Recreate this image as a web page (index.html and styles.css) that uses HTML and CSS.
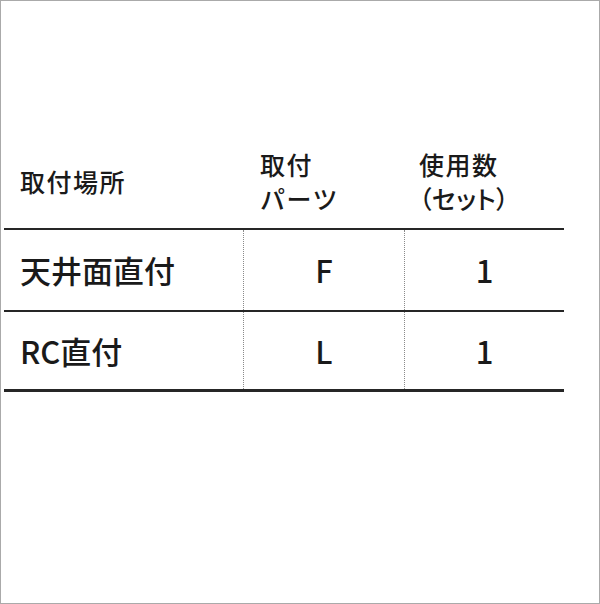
FILE: index.html
```html
<!DOCTYPE html>
<html lang="ja">
<head>
<meta charset="utf-8">
<link rel="stylesheet" href="styles.css">
</head>
<body>
<div class="frame">
  <div class="table">
    <div class="row head">
      <div class="cell c1">取付場所</div>
      <div class="cell c2">取付<br>パーツ</div>
      <div class="cell c3">使用数<br><span class="paren">（セット）</span></div>
    </div>
    <div class="row body r1">
      <div class="cell c1">天井面直付</div>
      <div class="cell c2">F</div>
      <div class="cell c3">1</div>
    </div>
    <div class="row body r2">
      <div class="cell c1">RC直付</div>
      <div class="cell c2">L</div>
      <div class="cell c3">1</div>
    </div>
  </div>
</div>
</body>
</html>
```

FILE: styles.css
```css
html, body {
  margin: 0;
  padding: 0;
  background: #fff;
}
.frame {
  width: 600px;
  height: 604px;
  box-sizing: border-box;
  border: 1px solid #aaa;
  padding: 133px 0 0 3px;
  font-family: "Noto Sans CJK JP", "Noto Sans", sans-serif;
  font-weight: 500;
  color: #1a1a1a;
}
.table {
  width: 560px;
}
.row {
  display: grid;
  grid-template-columns: 239px 161px 160px;
  box-sizing: border-box;
}
.head {
  height: 96px;
  border-bottom: 2px solid #262626;
  font-size: 25px;
  line-height: 34px;
  letter-spacing: 1.5px;
}
.head .cell {
  align-self: center;
  padding-left: 16px;
}
.head .c2 {
  padding-left: 17px;
}
.head .c3 {
  padding-left: 15px;
}
.paren {
  font-feature-settings: "palt";
  letter-spacing: 0.5px;
}
.body {
  font-size: 31px;
  line-height: 40px;
}
.r1 {
  height: 82px;
  border-bottom: 2px solid #262626;
}
.r2 {
  height: 80px;
  border-bottom: 3px solid #262626;
}
.body .cell {
  display: flex;
  align-items: center;
}
.body .c1 {
  padding-left: 16px;
}
.body .c2,
.body .c3 {
  justify-content: center;
  border-left: 1px dotted #8a8a8a;
}
```
